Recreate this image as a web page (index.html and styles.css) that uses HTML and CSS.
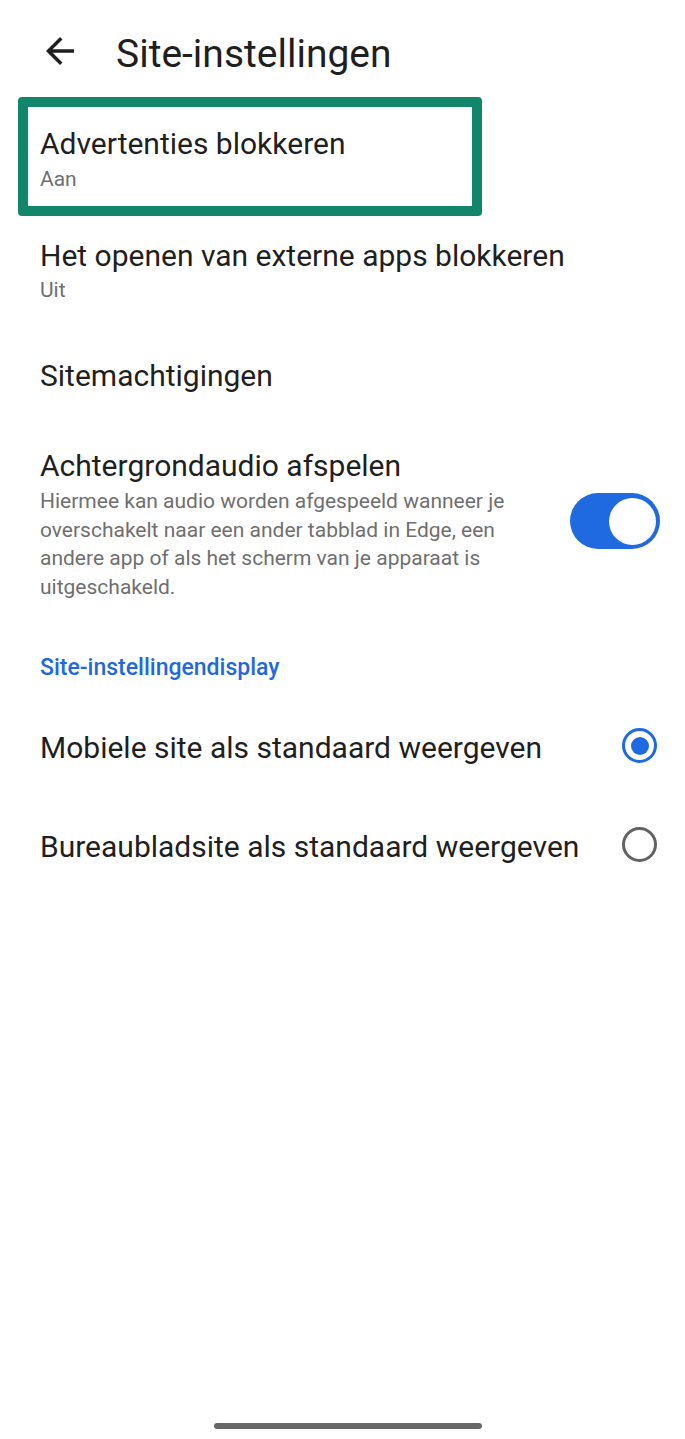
FILE: index.html
```html
<!DOCTYPE html>
<html lang="nl">
<head>
    <meta charset="UTF-8">
    <meta name="viewport" content="width=device-width, initial-scale=1.0">
    <title>Site-instellingen</title>
    <link rel="stylesheet" href="styles.css">
</head>
<body>

    <div class="topbar">
        <svg class="back" viewBox="0 0 24 24" aria-hidden="true">
            <path d="M20 11H7.83l5.59-5.59L12 4l-8 8 8 8 1.41-1.41L7.83 13H20v-2z"/>
        </svg>
        <h1 class="page-title">Site-instellingen</h1>
    </div>

    <div class="settings">
        <div class="highlight">
            <div class="item-title">Advertenties blokkeren</div>
            <div class="item-sub">Aan</div>
        </div>

        <div class="row">
            <div class="item-text">
                <div class="item-title">Het openen van externe apps blokkeren</div>
                <div class="item-sub">Uit</div>
            </div>
        </div>

        <div class="row">
            <div class="item-text">
                <div class="item-title">Sitemachtigingen</div>
            </div>
        </div>

        <div class="row">
            <div class="item-text">
                <div class="item-title">Achtergrondaudio afspelen</div>
                <div class="item-desc">Hiermee kan audio worden afgespeeld wanneer je overschakelt naar een ander tabblad in Edge, een andere app of als het scherm van je apparaat is uitgeschakeld.</div>
            </div>
            <div class="toggle on"><span class="thumb"></span></div>
        </div>

        <div class="section-head">Site-instellingendisplay</div>

        <div class="radio-row">
            <div class="item-title">Mobiele site als standaard weergeven</div>
            <span class="radio checked"></span>
        </div>
        <div class="radio-row">
            <div class="item-title">Bureaubladsite als standaard weergeven</div>
            <span class="radio"></span>
        </div>
    </div>

    <div class="home-bar"></div>

</body>
</html>
```

FILE: styles.css
```css
body {
    margin: 0;
    min-height: 100vh;
    display: flex;
    flex-direction: column;
    background: #ffffff;
    color: #1f1f1f;
    font-family: Roboto, "Noto Sans", sans-serif;
}

/* header */
.topbar {
    display: flex;
    align-items: flex-start;
    padding-top: 30px;
    height: 67px;
}
.back {
    width: 42px;
    height: 42px;
    margin-left: 39px;
    fill: #1f1f1f;
}
.page-title {
    margin: 1px 0 0 35px;
    font-size: 39px;
    line-height: 46px;
    font-weight: 400;
}

/* list items */
.item-title {
    font-size: 30px;
    line-height: 36px;
}
.item-sub {
    margin-top: 2px;
    font-size: 21px;
    line-height: 28px;
    color: #6f6f6f;
}
.item-desc {
    margin-top: 3px;
    font-size: 21px;
    line-height: 28.5px;
    color: #6f6f6f;
}

.highlight {
    box-sizing: border-box;
    width: 464px;
    margin-left: 18px;
    padding: 19px 12px 13px;
    border: 10px solid #12866b;
    border-radius: 4px;
}
.highlight .item-sub {
    margin-top: 3px;
}

.row {
    display: flex;
    align-items: center;
    gap: 40px;
    padding: 27px 25px 27px 40px;
}
.highlight + .row {
    padding-top: 22px;
}
.item-text {
    flex: 1;
}

.toggle {
    flex: none;
    box-sizing: border-box;
    width: 90px;
    height: 56px;
    margin-bottom: 7px;
    padding: 0 4px;
    border-radius: 28px;
    display: flex;
    align-items: center;
    justify-content: flex-start;
    background: #bdbdbd;
}
.toggle.on {
    justify-content: flex-end;
    background: #1f6ae1;
}
.thumb {
    width: 47px;
    height: 47px;
    border-radius: 50%;
    background: #ffffff;
}

.section-head {
    padding: 26px 40px 16px;
    font-size: 23px;
    line-height: 28px;
    font-weight: 500;
    color: #1f68e0;
}

.radio-row {
    height: 99px;
    display: flex;
    align-items: center;
    justify-content: space-between;
    padding: 0 28px 0 40px;
}
.radio {
    box-sizing: border-box;
    width: 35px;
    height: 35px;
    margin-bottom: 4px;
    border: 3px solid #626262;
    border-radius: 50%;
    display: flex;
    align-items: center;
    justify-content: center;
}
.radio.checked {
    border-color: #1f6ae1;
}
.radio.checked::after {
    content: "";
    width: 18px;
    height: 18px;
    border-radius: 50%;
    background: #1f6ae1;
}

.home-bar {
    margin: auto 0 10px 214px;
    width: 268px;
    height: 6px;
    border-radius: 3px;
    background: #666666;
}
```
